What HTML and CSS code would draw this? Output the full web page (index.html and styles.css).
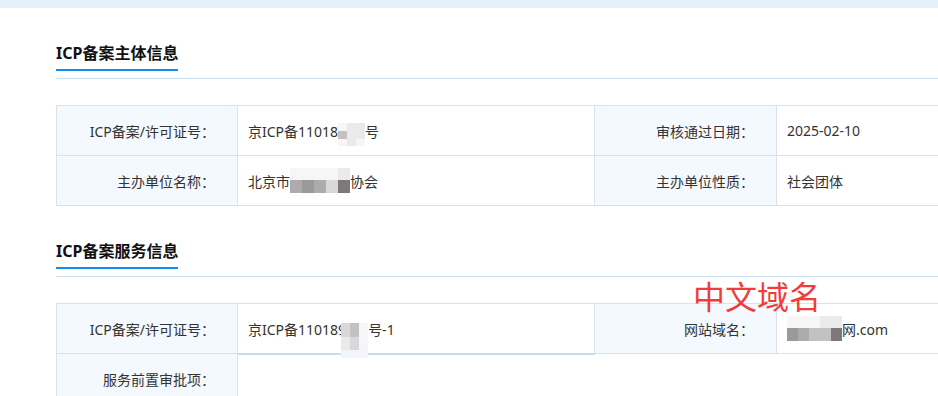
FILE: index.html
```html
<!DOCTYPE html>
<html lang="zh-CN">
<head>
    <meta charset="UTF-8">
    <title>ICP备案信息</title>
    <link rel="stylesheet" href="styles.css">
</head>
<body>
    <div class="topbar"></div>
    <div class="page">
        <div class="section">
            <div class="sec-head"><span class="sec-title">ICP备案主体信息</span></div>
            <div class="info">
                <div class="cell label">ICP备案/许可证号：</div>
                <div class="cell value">京ICP备11018<span class="mosaic mz-a"><i class="g0"></i><i class="g1"></i><i class="g1"></i><i class="g3"></i><i class="g1"></i><i class="g1"></i><i class="g0"></i><i class="g1"></i><i class="g0"></i></span>号</div>
                <div class="cell label">审核通过日期：</div>
                <div class="cell value">2025-02-10</div>

                <div class="cell label">主办单位名称：</div>
                <div class="cell value">北京市<span class="mosaic mz-b"><i class="g0"></i><i class="g0"></i><i class="g0"></i><i class="g0"></i><i class="g1"></i><i class="g4"></i><i class="g5"></i><i class="g4"></i><i class="g2"></i><i class="g6"></i></span>协会</div>
                <div class="cell label">主办单位性质：</div>
                <div class="cell value">社会团体</div>
            </div>
        </div>

        <div class="section">
            <div class="sec-head"><span class="sec-title">ICP备案服务信息</span></div>
            <div class="info">
                <div class="cell label">ICP备案/许可证号：</div>
                <div class="cell value focused">京ICP备110189<span class="mosaic mz-c"><i class="g2"></i><i class="g3"></i><i class="g0"></i><i class="g1"></i><i class="g2"></i><i class="g0"></i><i class="gb"></i><i class="gb"></i><i class="gb"></i></span>号-1</div>
                <div class="cell label">网站域名：</div>
                <div class="cell value"><span class="mosaic mz-d"><i class="g0"></i><i class="g0"></i><i class="g0"></i><i class="g1"></i><i class="g1"></i><i class="g5"></i><i class="g4"></i><i class="g3"></i><i class="g3"></i><i class="g6"></i></span>网.com</div>

                <div class="cell label">服务前置审批项：</div>
                <div class="cell value wide"></div>
            </div>
            <div class="note">中文域名</div>
        </div>
    </div>
</body>
</html>
```

FILE: styles.css
```css
html, body {
    margin: 0;
    overflow: hidden;
}
body {
    font-family: "Noto Sans", "Noto Sans CJK SC", sans-serif;
    color: #333;
    background: #fff;
    position: relative;
}
.topbar {
    height: 8px;
    background: #e3f0fc;
}
.page {
    padding-left: 56px;
    width: 1200px;
}
.section {
    padding-top: 33px;
}
.sec-head {
    border-bottom: 1px solid #cbe1f3;
    padding-bottom: 7px;
}
.sec-title {
    display: inline-block;
    font-size: 16px;
    font-weight: bold;
    line-height: 24px;
    color: #111;
    padding-bottom: 4px;
    border-bottom: 2px solid #108ef0;
}

/* 信息表格 */
.info {
    display: grid;
    grid-template-columns: 181px 357px 182px 357px;
    margin-top: 26px;
    border-top: 1px solid #d9e1e9;
    border-left: 1px solid #d9e1e9;
}
.cell {
    box-sizing: border-box;
    height: 50px;
    display: flex;
    align-items: center;
    font-size: 14px;
    border-right: 1px solid #d9e1e9;
    border-bottom: 1px solid #d9e1e9;
    white-space: nowrap;
}
.cell.label {
    justify-content: flex-end;
    padding-right: 22px;
    background: #f3f9fe;
}
.cell.value {
    padding-left: 10px;
    background: #fff;
}
.cell.wide {
    grid-column: span 3;
}
.cell.focused {
    position: relative;
    z-index: 1;
    border-bottom-color: #c6dcef;
    box-shadow: 0 1px 0 #c6dcef;
}

/* 打码 */
.mosaic {
    display: inline-grid;
    position: relative;
    z-index: 2;
}
.mosaic i {
    display: block;
}
.mz-a {
    grid-template-columns: repeat(3, 9px);
    grid-template-rows: 8px 8px 7px;
    top: 4px;
}
.mz-b {
    grid-template-columns: repeat(5, 12px);
    grid-template-rows: 12px 13px;
    top: 0;
}
.mz-c {
    grid-template-columns: repeat(3, 9px);
    grid-template-rows: 14px 13px 8px;
    top: 12px;
    margin-left: -5px;
}
.mz-d {
    grid-template-columns: repeat(5, 11px);
    grid-template-rows: 12px 13px;
    top: 0;
}
.g0 { background: #f7f6f7; }
.g1 { background: #eaeaeb; }
.g2 { background: #d9d7d9; }
.g3 { background: #c3c1c3; }
.g4 { background: #aeabae; }
.g5 { background: #9b999a; }
.g6 { background: #7c787b; }
.gb { background: #f2f5f9; }

.note {
    position: absolute;
    left: 693px;
    top: 275px;
    font-family: "Noto Sans CJK SC", sans-serif;
    font-size: 32px;
    line-height: 40px;
    color: #f23b3b;
    z-index: 3;
}
```
